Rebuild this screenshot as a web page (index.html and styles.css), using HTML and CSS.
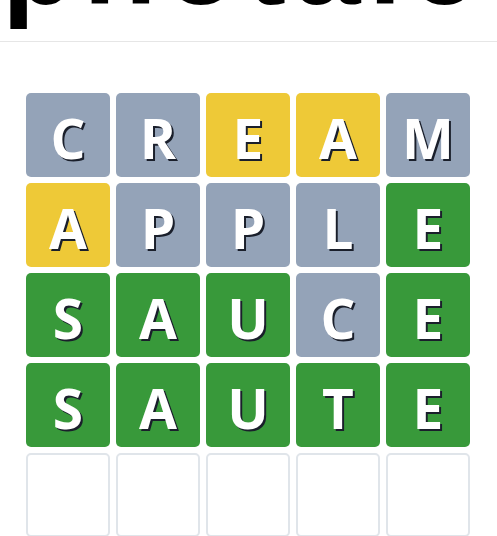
FILE: index.html
```html
<!DOCTYPE html>
<html lang="en">
<head>
<meta charset="utf-8">
<title>Wordle board</title>
<link rel="stylesheet" href="styles.css">
</head>
<body>
<header class="header">
  <h1 class="title">photale</h1>
</header>
<main class="board">
  <div class="tile absent">C</div>
  <div class="tile absent">R</div>
  <div class="tile present">E</div>
  <div class="tile present">A</div>
  <div class="tile absent">M</div>

  <div class="tile present">A</div>
  <div class="tile absent">P</div>
  <div class="tile absent">P</div>
  <div class="tile absent">L</div>
  <div class="tile correct">E</div>

  <div class="tile correct">S</div>
  <div class="tile correct">A</div>
  <div class="tile correct">U</div>
  <div class="tile absent">C</div>
  <div class="tile correct">E</div>

  <div class="tile correct">S</div>
  <div class="tile correct">A</div>
  <div class="tile correct">U</div>
  <div class="tile correct">T</div>
  <div class="tile correct">E</div>

  <div class="tile empty"></div>
  <div class="tile empty"></div>
  <div class="tile empty"></div>
  <div class="tile empty"></div>
  <div class="tile empty"></div>
</main>
</body>
</html>
```

FILE: styles.css
```css
* { box-sizing: border-box; }
html, body { margin: 0; padding: 0; background: #ffffff; }
body {
  font-family: "Open Sans", "Liberation Sans", sans-serif;
  overflow: hidden;
}
.header {
  height: 42px;
  border-bottom: 1px solid #e6e6e6;
  overflow: hidden;
}
.title {
  margin: -88px 0 0 2px;
  font-family: "Liberation Sans", Arial, sans-serif;
  font-weight: 700;
  font-size: 120px;
  line-height: 100px;
  letter-spacing: 8px;
  color: #000;
  white-space: nowrap;
}
.board {
  display: grid;
  grid-template-columns: repeat(5, 84px);
  grid-auto-rows: 84px;
  gap: 6px;
  justify-content: center;
  padding-top: 51px;
  padding-right: 1px;
}
.tile {
  border-radius: 5px;
  display: flex;
  align-items: center;
  justify-content: center;
  color: #ffffff;
  font-family: "Open Sans", sans-serif;
  font-weight: 700;
  font-size: 55px;
  padding-top: 4px;
  text-shadow: 2px 2px 0 #1a1f2b;
}
.absent { background: #94a3b8; }
.present { background: #eec937; }
.correct { background: #38993a; }
.empty {
  background: #ffffff;
  border: 2px solid #e0e5ea;
}
```
